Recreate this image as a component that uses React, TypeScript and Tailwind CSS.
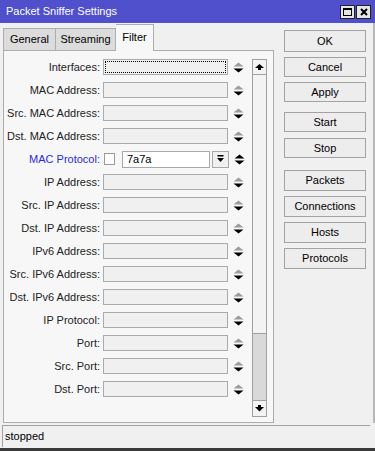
import { ReactNode } from "react";

const rows: { label: string; kind?: "focus" | "proto" }[] = [
  { label: "Interfaces:", kind: "focus" },
  { label: "MAC Address:" },
  { label: "Src. MAC Address:" },
  { label: "Dst. MAC Address:" },
  { label: "MAC Protocol:", kind: "proto" },
  { label: "IP Address:" },
  { label: "Src. IP Address:" },
  { label: "Dst. IP Address:" },
  { label: "IPv6 Address:" },
  { label: "Src. IPv6 Address:" },
  { label: "Dst. IPv6 Address:" },
  { label: "IP Protocol:" },
  { label: "Port:" },
  { label: "Src. Port:" },
  { label: "Dst. Port:" },
];

function Spinner({ active }: { active?: boolean }) {
  return (
    <svg width="11" height="11" viewBox="0 0 11 11" className="shrink-0">
      <path d="M5.5 0.5 L10.5 4.5 H0.5 Z" fill={active ? "#000" : "#9c9c9c"} />
      <path d="M0.5 6.5 H10.5 L5.5 10.5 Z" fill="#000" />
    </svg>
  );
}

function Btn({ children, cls }: { children: ReactNode; cls: string }) {
  return (
    <div
      className={`w-[82px] flex items-center justify-center bg-[#ededed] border border-[#a3a3a3] text-black ${cls}`}
    >
      {children}
    </div>
  );
}

function FieldRow({ label, kind }: { label: string; kind?: "focus" | "proto" }) {
  return (
    <div className="flex items-center h-[16px]">
      <span
        className={`w-[96px] text-right whitespace-nowrap ${
          kind === "proto" ? "text-[#2a2ae6]" : "text-[#222]"
        }`}
      >
        {label}
      </span>
      {kind === "proto" ? (
        <div className="flex items-center ml-[4px] w-[125px] h-[17px]">
          <div className="w-[11px] h-[12px] bg-white border border-[#9a9a9a]" />
          <div className="ml-[7px] w-[88px] h-[17px] bg-white border border-[#a8a8a8] flex items-center pl-[4px]">
            7a7a
          </div>
          <div className="ml-[2px] w-[17px] h-[17px] bg-[#f0f0f0] border border-[#a8a8a8] flex items-center justify-center">
            <svg width="7" height="8" viewBox="0 0 7 8">
              <rect x="0.5" y="0" width="6" height="1.5" fill="#000" />
              <path d="M0 3 H7 L3.5 7 Z" fill="#000" />
            </svg>
          </div>
        </div>
      ) : (
        <div className="ml-[3px] w-[125px] h-[16px] border border-[#ababab] bg-[#f0f0f0] p-[1px]">
          {kind === "focus" && (
            <div className="w-full h-full border border-dotted border-black" />
          )}
        </div>
      )}
      <div className="ml-[5px]">
        <Spinner active={kind === "proto"} />
      </div>
    </div>
  );
}

export default function App() {
  return (
    <div className="w-[375px] h-[451px] bg-[#f0f0f0] flex flex-col overflow-hidden border-b-[3px] border-[#3a3a3a] font-['Liberation_Sans',Arial,sans-serif] text-[11px] text-black">
      {/* title bar */}
      <div className="h-[23px] bg-[#5050cc] flex items-center pl-[6px] pr-[4px] shrink-0">
        <span className="text-white text-[11px] flex-1">Packet Sniffer Settings</span>
        <div className="w-[15px] h-[14px] bg-[#e6e6e6] border border-[#222] flex items-center justify-center">
          <div className="w-[9px] h-[8px] border border-black border-t-2" />
        </div>
        <div className="ml-[1px] w-[15px] h-[14px] bg-[#e6e6e6] border border-[#222] flex items-center justify-center">
          <svg width="8" height="8" viewBox="0 0 8 8">
            <path d="M1 1 L7 7 M7 1 L1 7" stroke="#000" strokeWidth="2" />
          </svg>
        </div>
      </div>

      <div className="flex h-[400px] border-r-2 border-[#b8b8b8]">
        {/* tabs + panel */}
        <div className="flex flex-col pl-[3px] w-[274px]">
          <div className="h-[27px] flex items-end">
            <div className="h-[22px] w-[53px] bg-[#dcdcdc] border border-[#adadad] border-b-0 flex items-center justify-center">
              General
            </div>
            <div className="h-[22px] w-[60px] bg-[#dcdcdc] border border-[#adadad] border-b-0 border-l-0 flex items-center justify-center">
              Streaming
            </div>
            <div className="relative z-10 -mb-px h-[27px] w-[38px] bg-[#f7f7f7] border border-[#adadad] border-b-0 border-l-0 flex items-start justify-center pt-[4px]">
              Filter
            </div>
          </div>
          <div className="h-[373px] bg-[#f7f7f7] border border-[#adadad] flex pt-[8px] pr-[6px]">
            <div className="flex flex-col gap-[7px]">
              {rows.map((r) => (
                <FieldRow key={r.label} label={r.label} kind={r.kind} />
              ))}
            </div>
            {/* scrollbar */}
            <div className="ml-[7px] w-[16px] h-[358px] flex flex-col border border-[#a0a0a0] bg-[#d9d9d9]">
              <div className="h-[15px] bg-[#f3f3f3] border-b border-[#a0a0a0] flex items-center justify-center">
                <svg width="9" height="7" viewBox="0 0 9 7">
                  <path d="M4.5 0 L9 4 H0 Z" fill="#000" />
                  <rect x="3" y="4" width="3" height="2" fill="#000" />
                </svg>
              </div>
              <div className="h-[259px] bg-[#f3f3f3] border-b border-[#a0a0a0]" />
              <div className="flex-1" />
              <div className="h-[16px] bg-[#f3f3f3] border-t border-[#a0a0a0] flex items-center justify-center">
                <svg width="9" height="7" viewBox="0 0 9 7">
                  <rect x="3" y="0" width="3" height="2" fill="#000" />
                  <path d="M0 2 H9 L4.5 6.5 Z" fill="#000" />
                </svg>
              </div>
            </div>
          </div>
        </div>

        {/* buttons */}
        <div className="flex flex-col pl-[10px] pt-[7px]">
          <Btn cls="h-[22px] border-[#2b2b2b]">OK</Btn>
          <Btn cls="h-[20px] mt-[5px]">Cancel</Btn>
          <Btn cls="h-[20px] mt-[5px]">Apply</Btn>
          <Btn cls="h-[20px] mt-[10px]">Start</Btn>
          <Btn cls="h-[20px] mt-[6px]">Stop</Btn>
          <Btn cls="h-[21px] mt-[12px]">Packets</Btn>
          <Btn cls="h-[21px] mt-[5px]">Connections</Btn>
          <Btn cls="h-[21px] mt-[5px]">Hosts</Btn>
          <Btn cls="h-[21px] mt-[5px]">Protocols</Btn>
        </div>
      </div>

      {/* status bar */}
      <div className="mt-[2px] mb-[1px] ml-[2px] w-[368px] h-[22px] border-t border-l border-[#a0a0a0] flex items-center pl-[2px]">
        stopped
      </div>
    </div>
  );
}
